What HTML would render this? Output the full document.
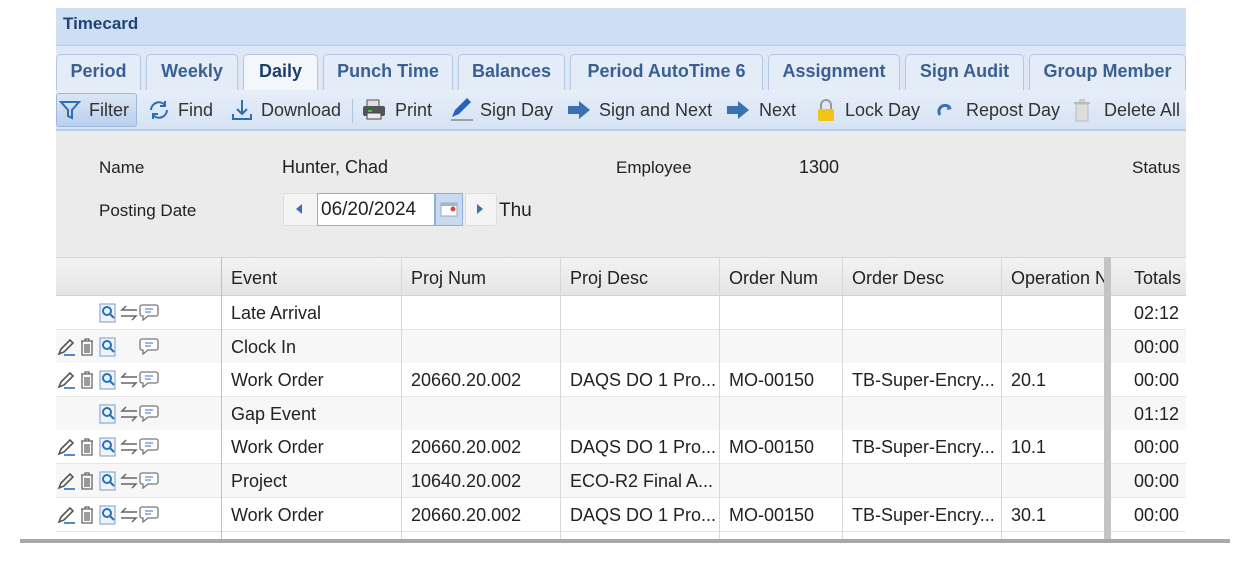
<!DOCTYPE html>
<html><head><meta charset="utf-8"><style>
*{margin:0;padding:0;box-sizing:border-box}
body{width:1251px;height:588px;background:#fff;font-family:"Liberation Sans",sans-serif;position:relative;overflow:hidden;color:#222}
.a{position:absolute}
.title{left:56px;top:8px;width:1130px;height:38px;background:#cfdff3;border-bottom:1px solid #b8cce8;font-weight:bold;color:#1f4577;font-size:17px;padding:6px 0 0 7px}
.tabband{left:56px;top:46px;width:1130px;height:44px;background:#dde7f5}
.tab{position:absolute;top:8px;height:36px;background:#e4ecf7;border:1px solid #b3c7e3;border-bottom:none;border-radius:5px 5px 0 0;font-weight:bold;color:#3a5f92;font-size:18px;text-align:center;line-height:32px}
.tab.sel{background:#f3f7fc;color:#1d3f6e;height:38px}
.tb{left:56px;top:90px;width:1130px;height:41px;background:linear-gradient(#e6eef9,#d6e3f4);border-bottom:2px solid #b8cde9;font-size:18px;color:#333}
.tb span{position:absolute;top:10px;white-space:nowrap}
.form{left:56px;top:131px;width:1130px;height:126px;background:#ebebeb;font-size:17px;color:#222}
.form span{position:absolute}
.grid{left:56px;top:257px;width:1130px;height:282px;background:#fff;font-size:18px;color:#222}
.hdr{position:absolute;top:0;left:0;width:1130px;height:39px;background:linear-gradient(#f3f3f3,#e4e4e4);border-top:1px solid #c8d7ec;border-bottom:1px solid #d0d0d0}
.c{position:absolute;white-space:nowrap;overflow:hidden}
.vl{position:absolute;top:0;width:1px;background:#d8d8d8}
.row{position:absolute;left:0;width:1130px;height:34px;border-bottom:1px solid #e6e6e6}
</style></head><body>
<div class="a title">Timecard</div>
<div class="a tabband">
<div class="tab" style="left:0;width:85px">Period</div>
<div class="tab" style="left:90px;width:92px">Weekly</div>
<div class="tab sel" style="left:187px;width:75px">Daily</div>
<div class="tab" style="left:267px;width:130px">Punch Time</div>
<div class="tab" style="left:402px;width:107px">Balances</div>
<div class="tab" style="left:514px;width:193px">Period AutoTime 6</div>
<div class="tab" style="left:712px;width:132px">Assignment</div>
<div class="tab" style="left:849px;width:119px">Sign Audit</div>
<div class="tab" style="left:973px;width:157px">Group Member</div>
</div>
<div class="a tb">
<div style="position:absolute;left:0;top:3px;width:81px;height:34px;background:linear-gradient(#dbe6f4,#b9cfee);border:1px solid #9fb8dc;border-radius:3px"></div>
<svg class="a" style="left:3px;top:9px" width="22" height="22" viewBox="0 0 22 22"><path d="M2 3h18l-7 8v8l-4-2v-6z" fill="none" stroke="#2b6fb8" stroke-width="2"/></svg>
<span style="left:33px">Filter</span>
<svg class="a" style="left:91px;top:9px" width="24" height="22" viewBox="0 0 24 22"><path d="M4 11a8 8 0 0 1 14-5M20 11a8 8 0 0 1-14 5" fill="none" stroke="#2b6fb8" stroke-width="2"/><path d="M18 2v5h-5M6 20v-5h5" fill="none" stroke="#2b6fb8" stroke-width="2"/></svg>
<span style="left:122px">Find</span>
<svg class="a" style="left:174px;top:8px" width="24" height="24" viewBox="0 0 24 24"><path d="M12 2v14M7 11l5 5 5-5M3 16v5h18v-5" fill="none" stroke="#2b6fb8" stroke-width="2"/></svg>
<span style="left:205px">Download</span>
<div style="position:absolute;left:296px;top:9px;width:1px;height:24px;background:#b0c4e0"></div>
<svg class="a" style="left:305px;top:9px" width="26" height="22" viewBox="0 0 26 22"><rect x="6" y="1" width="12" height="7" fill="#ddd" stroke="#555"/><rect x="2" y="7" width="22" height="10" rx="2" fill="#555"/><rect x="6" y="14" width="14" height="6" fill="#eee" stroke="#444"/><rect x="7" y="11" width="4" height="2" fill="#3c3"/></svg>
<span style="left:339px">Print</span>
<svg class="a" style="left:392px;top:6px" width="26" height="26" viewBox="0 0 26 26"><path d="M4 21l3-7 12-12 4 4-12 12z" fill="#2563b8"/><path d="M3 24h22" stroke="#888" stroke-width="1.5"/></svg>
<span style="left:424px">Sign Day</span>
<svg class="a" style="left:511px;top:10px" width="24" height="20" viewBox="0 0 24 20"><path d="M1 6h11V1l11 9-11 9v-5H1z" fill="#3d6fb4"/></svg>
<span style="left:543px">Sign and Next</span>
<svg class="a" style="left:670px;top:10px" width="24" height="20" viewBox="0 0 24 20"><path d="M1 6h11V1l11 9-11 9v-5H1z" fill="#3d6fb4"/></svg>
<span style="left:703px">Next</span>
<svg class="a" style="left:760px;top:8px" width="20" height="24" viewBox="0 0 20 24"><path d="M5 11V7a5 5 0 0 1 10 0v4" fill="none" stroke="#999" stroke-width="2"/><rect x="2" y="11" width="16" height="12" rx="2" fill="#f2c417"/></svg>
<span style="left:789px">Lock Day</span>
<svg class="a" style="left:880px;top:12px" width="20" height="18" viewBox="0 0 20 18"><path d="M4 13a6 6 0 0 1 10-7" fill="none" stroke="#3d6fb4" stroke-width="3"/><path d="M12 3l4 4-5 1z" fill="#3d6fb4"/></svg>
<span style="left:910px">Repost Day</span>
<svg class="a" style="left:1017px;top:9px" width="18" height="24" viewBox="0 0 18 24"><rect x="3" y="5" width="12" height="17" fill="#ddd" stroke="#bbb"/><rect x="1" y="3" width="16" height="2" fill="#bbb"/><rect x="6" y="0" width="6" height="3" fill="#ccc"/></svg>
<span style="left:1048px">Delete All</span>
</div>
<div class="a form">
<span style="left:43px;top:27px">Name</span>
<span style="left:226px;top:26px;font-size:18px">Hunter, Chad</span>
<span style="left:560px;top:27px">Employee</span>
<span style="left:743px;top:26px;font-size:18px">1300</span>
<span style="left:1076px;top:27px">Status</span>
<span style="left:43px;top:70px">Posting Date</span>
<div style="position:absolute;left:227px;top:62px;width:36px;height:33px;background:#f4f4f4;border:1px solid #ddd;border-radius:3px"></div>
<svg class="a" style="left:239px;top:73px" width="8" height="10"><path d="M7 0v10L1 5z" fill="#3d6fb4"/></svg>
<div style="position:absolute;left:261px;top:62px;width:118px;height:33px;background:#fff;border:1px solid #8fb0d8;font-size:19px;padding:5px 0 0 3px">06/20/2024</div>
<div style="position:absolute;left:379px;top:62px;width:28px;height:33px;background:#c9daf0;border:1px solid #8fb0d8"></div>
<svg class="a" style="left:384px;top:70px" width="18" height="16"><rect x="1" y="2" width="16" height="13" fill="#fff" stroke="#9ab"/><rect x="1" y="2" width="16" height="3" fill="#9bb6d8"/><circle cx="13" cy="8" r="2.5" fill="#d44"/></svg>
<div style="position:absolute;left:409px;top:62px;width:32px;height:33px;background:#f4f4f4;border:1px solid #ddd;border-radius:3px"></div>
<svg class="a" style="left:420px;top:73px" width="8" height="10"><path d="M1 0v10l6-5z" fill="#3d6fb4"/></svg>
<span style="left:443px;top:69px;font-size:19px">Thu</span>
</div>
<div class="a grid">
<div class="hdr">
<div class="c" style="left:175px;top:10px">Event</div>
<div class="c" style="left:355px;top:10px">Proj Num</div>
<div class="c" style="left:514px;top:10px">Proj Desc</div>
<div class="c" style="left:673px;top:10px">Order Num</div>
<div class="c" style="left:796px;top:10px">Order Desc</div>
<div class="c" style="left:955px;top:10px;width:93px">Operation N</div>
<div class="c" style="left:1078px;top:10px">Totals</div>
</div>
<div id="rows"></div>
<div class="vl" style="left:165px;height:282px;background:#a9c3e6"></div>
<div class="vl" style="left:345px;height:282px"></div>
<div class="vl" style="left:504px;height:282px"></div>
<div class="vl" style="left:663px;height:282px"></div>
<div class="vl" style="left:786px;height:282px"></div>
<div class="vl" style="left:945px;height:282px"></div>
<div class="vl" style="left:1048px;height:282px;width:7px;background:#c4c4c4"></div>
</div>
<div class="a" style="left:20px;top:539px;width:1210px;height:4px;background:#a8a8a8"></div>
<script>
var d=[[0,"Late Arrival","","","","","","02:12"],[1,"Clock In","","","","","","00:00"],[2,"Work Order","20660.20.002","DAQS DO 1 Pro...","MO-00150","TB-Super-Encry...","20.1","00:00"],[0,"Gap Event","","","","","","01:12"],[2,"Work Order","20660.20.002","DAQS DO 1 Pro...","MO-00150","TB-Super-Encry...","10.1","00:00"],[2,"Project","10640.20.002","ECO-R2 Final A...","","","","00:00"],[2,"Work Order","20660.20.002","DAQS DO 1 Pro...","MO-00150","TB-Super-Encry...","30.1","00:00"]];
var L=[175,355,514,673,796,955,1078];
var pen='<svg style="position:absolute;left:1px;top:7px" width="20" height="20" viewBox="0 0 20 20"><path d="M2 17l2-5 9-9 3 3-9 9z" fill="none" stroke="#555" stroke-width="1.6"/><path d="M7 18h11" stroke="#2b6fb8" stroke-width="1.6"/></svg>';
var tr='<svg style="position:absolute;left:23px;top:7px" width="16" height="20" viewBox="0 0 16 20"><path d="M2 4h12M6 4V2h4v2M3 4v14h10V4M6 7v9M8 7v9M10 7v9" fill="none" stroke="#666" stroke-width="1.3"/></svg>';
var mg='<svg style="position:absolute;left:43px;top:7px" width="18" height="20" viewBox="0 0 18 20"><rect x="1" y="1" width="15" height="18" fill="#eef4fb" stroke="#7a9cc6"/><circle cx="8" cy="8" r="4" fill="none" stroke="#2b6fb8" stroke-width="2"/><path d="M11 11l4 4" stroke="#2b6fb8" stroke-width="2"/></svg>';
var ar='<svg style="position:absolute;left:63px;top:8px" width="20" height="18" viewBox="0 0 20 18"><path d="M18 6H3l4-4M2 12h15l-4 4" fill="none" stroke="#666" stroke-width="1.5"/></svg>';
var ch='<svg style="position:absolute;left:83px;top:7px" width="20" height="19" viewBox="0 0 20 19"><path d="M3 2h14a2 2 0 0 1 2 2v7a2 2 0 0 1-2 2H9l-5 4v-4H3a2 2 0 0 1-2-2V4a2 2 0 0 1 2-2z" fill="#fff" stroke="#777" stroke-width="1.3"/><path d="M6 6h8M6 9h6" stroke="#5b8fd0" stroke-width="1.2"/></svg>';
var h='';
d.forEach(function(r,i){
 var bg=i%2?'#f7f7f7':'#fff';
 var ic=r[0]==0?mg+ar+ch:r[0]==1?pen+tr+mg+ch:pen+tr+mg+ar+ch;
 h+='<div class="row" style="top:'+(39+i*33.6)+'px;background:'+bg+'">'+ic;
 for(var k=1;k<8;k++)h+='<div class="c" style="left:'+L[k-1]+'px;top:7px">'+r[k]+'</div>';
 h+='</div>';
});
document.getElementById('rows').innerHTML=h;
</script>
</body></html>
